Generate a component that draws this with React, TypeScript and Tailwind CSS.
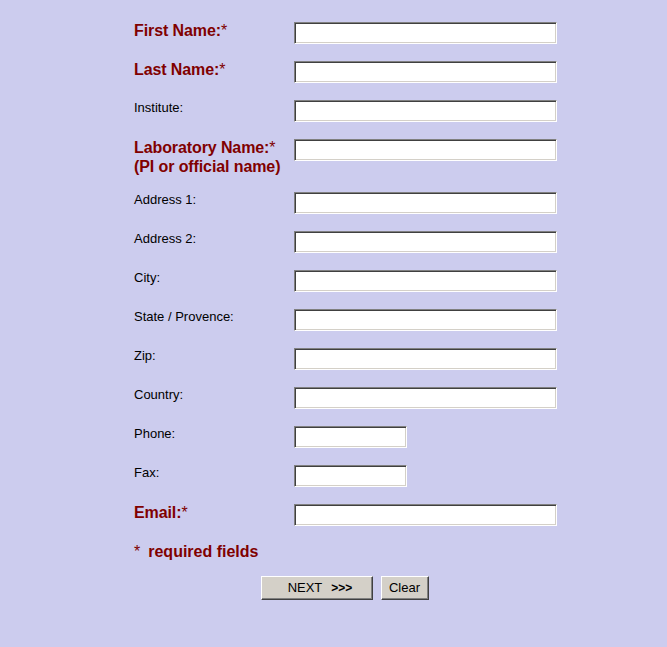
import React from "react";

type Field = {
    label: string;
    sub?: string;
    required?: boolean;
    short?: boolean;
};

const fields: Field[] = [
    { label: "First Name:", required: true },
    { label: "Last Name:", required: true },
    { label: "Institute:" },
    { label: "Laboratory Name:", sub: "(PI or official name)", required: true },
    { label: "Address 1:" },
    { label: "Address 2:" },
    { label: "City:" },
    { label: "State / Provence:" },
    { label: "Zip:" },
    { label: "Country:" },
    { label: "Phone:", short: true },
    { label: "Fax:", short: true },
    { label: "Email:", required: true },
];

const inputCls =
    "h-[22px] bg-white border border-t-[#808080] border-l-[#808080] border-r-white border-b-white shadow-[inset_1px_1px_0_#404040,inset_-1px_-1px_0_#d4d0c8] outline-none px-1 text-[13px]";

const buttonCls =
    "h-[24px] bg-[#d4d0c8] border border-t-white border-l-white border-r-[#404040] border-b-[#404040] shadow-[inset_-1px_-1px_0_#808080] text-[13px] text-black";

function Row({ field }: { field: Field }) {
    return (
        <div className="flex items-start">
            <div className="w-[160px] shrink-0">
                {field.required ? (
                    <div className="-mt-[1px] -mb-[1px] text-[16px] leading-[19px] font-bold text-[#800000] tracking-[-0.1px]">
                        {field.label}
                        <span className="font-normal">*</span>
                        {field.sub && <div>{field.sub}</div>}
                    </div>
                ) : (
                    <div className="text-[13px] leading-[15px] text-black">{field.label}</div>
                )}
            </div>
            <input type="text" className={`${inputCls} ${field.short ? "w-[113px]" : "w-[263px]"}`} />
        </div>
    );
}

export default function App() {
    return (
        <div
            className="w-full h-[647px] bg-[#ccccee] overflow-hidden"
            style={{ fontFamily: '"Liberation Sans", Arial, sans-serif' }}
        >
            <div className="ml-[134px] w-[423px] pt-[22px]">
                <div className="flex flex-col gap-[17px]">
                    {fields.map((f) => (
                        <Row key={f.label} field={f} />
                    ))}
                </div>

                <div className="mt-[16px] text-[16px] leading-[19px] font-bold text-[#800000]">
                    <span className="font-normal">*</span>
                    <span className="ml-[8px]">required fields</span>
                </div>

                <div className="mt-[15px] -ml-[2px] flex justify-center gap-[8px]">
                    <button type="button" className={`${buttonCls} w-[112px] pl-[7px]`}>
                        NEXT
                        <span className="ml-[9px] font-bold text-[12px]">&gt;&gt;&gt;</span>
                    </button>
                    <button type="button" className={`${buttonCls} w-[48px]`}>
                        Clear
                    </button>
                </div>
            </div>
        </div>
    );
}
